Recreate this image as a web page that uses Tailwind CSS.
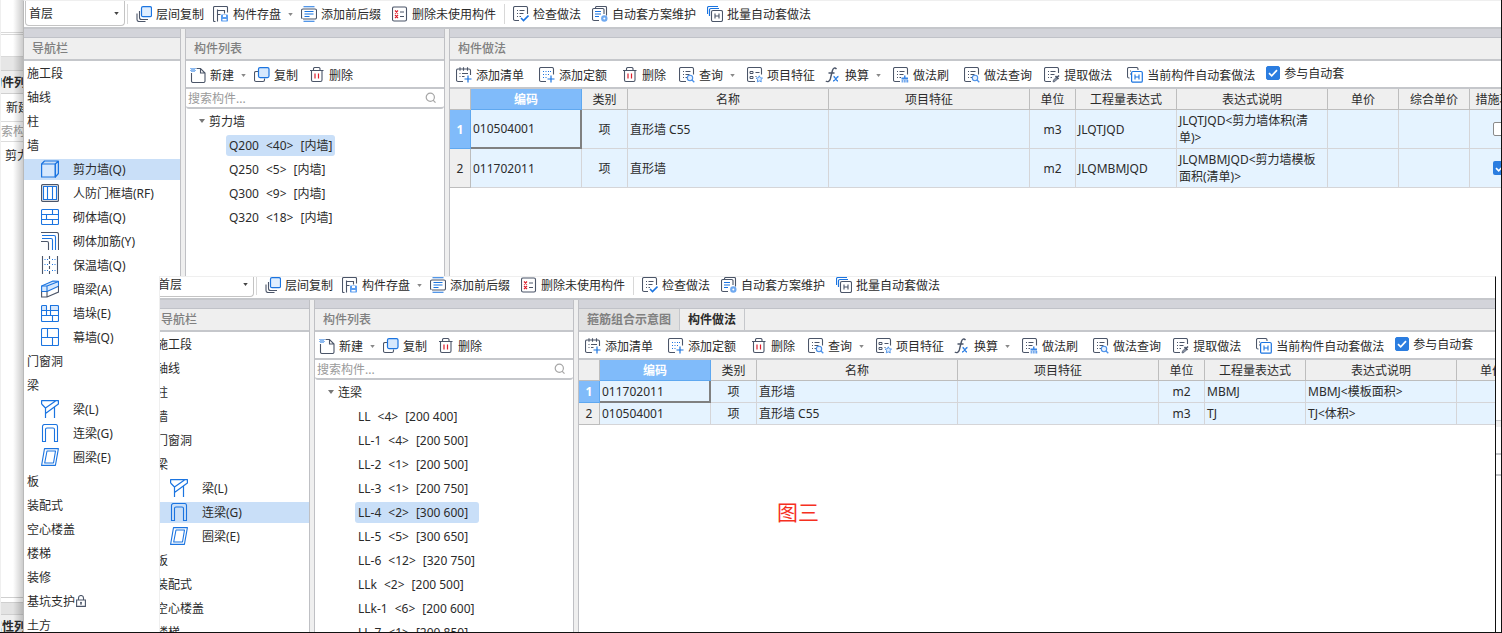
<!DOCTYPE html>
<html lang="zh-CN">
<head>
<meta charset="utf-8">
<title>构件做法</title>
<script src="https://cdn.jsdelivr.net/npm/@tailwindcss/browser@4"></script>
</head>
<body class="h-screen overflow-hidden bg-white font-['Noto_Sans','Noto_Sans_CJK_SC',sans-serif] text-[12px] leading-[17px] text-[#2b2b2b]">

<!-- icon sprite -->
<svg class="hidden" aria-hidden="true">
  <defs>
    <g id="d-lines" fill="none" stroke="#4b5568"><path d="M4 4.500h1M6.500 4.500h5M4 7.500h1M6.500 7.500h4M4 10.500h1M6.500 10.500h1.500"/></g>
    <symbol id="i-layers" viewBox="0 0 16 16"><g fill="none" stroke="#4b5568" stroke-width="1.100"><path d="M3.500 5v6.500a2 2 0 0 0 2 2H12"/><path d="M1 7.500v6a2 2 0 0 0 2 2h6.500"/></g><rect x="5.500" y=".7" width="10" height="10" rx="1.500" fill="#dfeeff" stroke="#1b74e0" stroke-width="1.200"/></symbol>
    <symbol id="i-save" viewBox="0 0 16 16"><path d="M2.500 15.500h-1a1 1 0 0 1-1-1V1.500a1 1 0 0 1 1-1h12a1 1 0 0 1 1 1v5M4.500 15.500v-12M4.500 8.500h3M4.500 4.500h7v3" fill="none" stroke="#4b5568" stroke-width="1.100"/><rect x="8" y="8.500" width="7" height="7" rx=".8" fill="#5a9df0"/><path d="M10 9h3v2h-3zM9.500 13h4v1.500h-4z" fill="#fff"/></symbol>
    <symbol id="i-affix" viewBox="0 0 16 16"><path d="M2.500 .7h11M2.500 15.300h11M3.500 5.500h9M3.500 8h9M3.500 10.500h5" fill="none" stroke="#1b74e0" stroke-width="1.100"/><path d="M1.500 12.500a1 1 0 0 1-1-1v-7A1.500 1.500 0 0 1 2 3h12a1.500 1.500 0 0 1 1.500 1.500v7A1.500 1.500 0 0 1 14 13H2" fill="none" stroke="#4b5568" stroke-width="1.100"/></symbol>
    <symbol id="i-unused" viewBox="0 0 16 16"><rect x=".5" y="1" width="14" height="14" rx="1.500" fill="none" stroke="#4b5568" stroke-width="1.100"/><path d="M3 4.500l3 3m0-3l-3 3M3 9l3 3m0-3l-3 3" stroke="#dd1f2d" stroke-width="1.200"/><path d="M8 6h4M8 10.500h4" stroke="#4b5568"/></symbol>
    <symbol id="i-check" viewBox="0 0 16 16"><path d="M6 14.500H2a1.500 1.500 0 0 1-1.500-1.500V2A1.500 1.500 0 0 1 2 .5h11A1.500 1.500 0 0 1 14.500 2v6" fill="none" stroke="#4b5568" stroke-width="1.100"/><use href="#d-lines"/><path d="M8 12l2.500 2.500 5-5" fill="none" stroke="#1b74e0" stroke-width="1.600"/></symbol>
    <symbol id="i-scheme" viewBox="0 0 16 16"><path d="M3.500 2.500V1.500a1 1 0 0 1 1-1h9a1 1 0 0 1 1 1v8M7 14.500H2A1.500 1.500 0 0 1 .5 13V4A1.400 1.400 0 0 1 2 2.500h8.500A1.400 1.400 0 0 1 12 4v4" fill="none" stroke="#4b5568" stroke-width="1.100"/><path d="M3 5.500h6M3 8h6M3 10.500h4" stroke="#1b74e0" stroke-width="1.100"/><circle cx="12.300" cy="12.500" r="3.200" fill="#6fa9f0"/><circle cx="12.300" cy="12.500" r="1" fill="#fff"/></symbol>
    <symbol id="i-batch" viewBox="0 0 16 16"><path d="M.5 8V2A1.400 1.400 0 0 1 2 .5h9M2.500 10V4A1.400 1.400 0 0 1 4 2.500h8" fill="none" stroke="#1b74e0" stroke-width="1.200"/><rect x="4.500" y="4.500" width="11" height="11" rx="1.500" fill="#fff" stroke="#4b5568" stroke-width="1.100"/><path d="M8 7.500v5M12 7.500v5M8 10h4" stroke="#4b5568" stroke-width="1.100"/></symbol>
    <symbol id="i-new" viewBox="0 0 16 16"><path d="M1.500 6v8a1.500 1.500 0 0 0 1.500 1.500h10.500a1.500 1.500 0 0 0 1.500-1.500V6L10.500 1.500H6.500M10.500 1.500V6H15" fill="none" stroke="#4b5568" stroke-width="1.100"/><path d="M.5 1h1v1h-1zM2.500 1h1v1h-1zM4.500 1h1v1h-1zM1.500 2h1v1h-1zM3.500 2h1v1h-1zM.5 3h1v1h-1zM2.500 3h1v1h-1zM4.500 3h1v1h-1zM1.500 4h1v1h-1zM3.500 4h1v1h-1z" fill="#1b74e0"/></symbol>
    <symbol id="i-copy" viewBox="0 0 16 16"><path d="M4 4.500H2A1.500 1.500 0 0 0 .5 6v7A1.500 1.500 0 0 0 2 14.500h7a1.500 1.500 0 0 0 1.500-1.500v-1.500" fill="none" stroke="#4b5568" stroke-width="1.100"/><rect x="4.500" y=".6" width="10.500" height="10" rx="1.500" fill="#d6e8fd" stroke="#1b74e0" stroke-width="1.200"/></symbol>
    <symbol id="i-trash" viewBox="0 0 16 16"><path d="M1 3.500h13.500M4.500 3.500V2A1.400 1.400 0 0 1 6 .5h3.500A1.400 1.400 0 0 1 11 2v1.500M2.500 3.500V13A1.500 1.500 0 0 0 4 14.500h7.500A1.500 1.500 0 0 0 13 13V3.500" fill="none" stroke="#4b5568" stroke-width="1.100"/><path d="M6 6.500v5M9.500 6.500v5" stroke="#dd1f2d" stroke-width="1.200"/></symbol>
    <symbol id="i-addlist" viewBox="0 0 16 16"><path d="M7 14.500H2A1.500 1.500 0 0 1 .5 13V3.500A1.500 1.500 0 0 1 2 2h11a1.500 1.500 0 0 1 1.500 1.500V8M4 .3v3.400M7.500.3v3.400M11.500.3v3.400" fill="none" stroke="#4b5568" stroke-width="1.100"/><path d="M3.500 6.500h1M6 6.500h6M3.500 9.500h1M6 9.500h2.500" stroke="#4b5568"/><path d="M8.500 12h7M12 8.500v7" stroke="#1b74e0" stroke-width="1.200"/></symbol>
    <symbol id="i-addquota" viewBox="0 0 16 16"><path d="M7 14.500H2A1.500 1.500 0 0 1 .5 13V2A1.500 1.500 0 0 1 2 .5h11A1.500 1.500 0 0 1 14.500 2v5.500" fill="none" stroke="#4b5568" stroke-width="1.100"/><path d="M4 4.500h1M6.500 4.500h1M9 4.500h1M11 4.500h1M4 7.500h1M6.500 7.500h1M9 7.500h1M4 10.500h1M6.500 10.500h1" stroke="#1b74e0" stroke-width="1"/><path d="M8.500 12h7M12 8.500v7" stroke="#1b74e0" stroke-width="1.200"/></symbol>
    <symbol id="i-query" viewBox="0 0 16 16"><path d="M7 14.500H2A1.500 1.500 0 0 1 .5 13V2A1.500 1.500 0 0 1 2 .5h11A1.500 1.500 0 0 1 14.500 2v5.500" fill="none" stroke="#4b5568" stroke-width="1.100"/><use href="#d-lines"/><circle cx="11" cy="11" r="2.700" fill="#e6f1ff" stroke="#4a90e8" stroke-width="1.100"/><path d="M13 13l2.300 2.300" stroke="#4a90e8" stroke-width="1.300"/></symbol>
    <symbol id="i-feature" viewBox="0 0 16 16"><path d="M8 14.500H2A1.500 1.500 0 0 1 .5 13V2A1.500 1.500 0 0 1 2 .5h11A1.500 1.500 0 0 1 14.500 2v5.500" fill="none" stroke="#4b5568" stroke-width="1.100"/><path d="M3 4.500h3v2H3zM3 9.500h3v2H3zM8.500 5.500h4M8.500 9.500h1" fill="none" stroke="#4b5568"/><path d="M12.300 8.800l1 2 2.200.3-1.600 1.600.4 2.200-2-1-2 1 .4-2.200-1.600-1.600 2.200-.3z" fill="#dfeeff" stroke="#4a90e8" stroke-width=".9"/></symbol>
    <symbol id="i-fx" viewBox="0 0 16 16"><path d="M11.500 2.200C10 .2 8 1 7.300 4L5.300 12c-.7 2.500-2.500 3.300-4.500 2M3.500 6h6" fill="none" stroke="#4b5568" stroke-width="1.400"/><path d="M8.500 9.500c2 0 2 4.500 4.500 4.500M13.500 9.500c-2 0-3 4.500-5.500 4.500" fill="none" stroke="#2f80e4" stroke-width="1.300"/></symbol>
    <symbol id="i-brush" viewBox="0 0 16 16"><path d="M7 14.500H2A1.500 1.500 0 0 1 .5 13V2A1.500 1.500 0 0 1 2 .5h11A1.500 1.500 0 0 1 14.500 2v5.500" fill="none" stroke="#4b5568" stroke-width="1.100"/><use href="#d-lines"/><path d="M11 8.500h1.500v2H15v2H8.500v-2H11zM8.700 13h1v2.500h-1zM10.700 13h1v2.500h-1zM12.500 13h1v2.500h-1zM14.200 13h1v2.500h-1z" fill="#3c87e6"/></symbol>
    <symbol id="i-extract" viewBox="0 0 16 16"><path d="M7 14.500H2A1.500 1.500 0 0 1 .5 13V2A1.500 1.500 0 0 1 2 .5h11A1.500 1.500 0 0 1 14.500 2v4" fill="none" stroke="#4b5568" stroke-width="1.100"/><use href="#d-lines"/><path d="M9 15l.5-2 3-3 1.500 1.500-3 3z" fill="#8892a3" stroke="#4b5568" stroke-width=".7"/><path d="M11.500 9l3 3M13 10.500L15 8.500" stroke="#4b5568" stroke-width="1.600"/></symbol>
    <symbol id="i-current" viewBox="0 0 16 16"><path d="M2.500 11H2A1.500 1.500 0 0 1 .5 9.500V2A1.500 1.500 0 0 1 2 .5h7.500A1.500 1.500 0 0 1 11 2v1M3 4h1M3 7h1" fill="none" stroke="#4b5568" stroke-width="1.100"/><rect x="4.600" y="4.500" width="10.700" height="10.700" rx="1.300" fill="#fff" stroke="#1b74e0" stroke-width="1.200"/><path d="M8 7.500v5M12 7.500v5M8 10h4" stroke="#1b74e0" stroke-width="1.100"/></symbol>
    <symbol id="i-search" viewBox="0 0 12 12"><circle cx="5.300" cy="5.300" r="4.100" fill="none" stroke="#a6a6a6" stroke-width="1.200"/><path d="M8 8.200l2.500 2.500" stroke="#a6a6a6" stroke-width="1.200"/></symbol>
    <symbol id="i-down" viewBox="0 0 6 4"><path d="M0 0h6L3 4z" fill="currentColor"/></symbol>
    <symbol id="i-lock" viewBox="0 0 10 12"><path d="M.6 5h8.800v6.400H.6zM2.500 5V3a2.500 2.500 0 0 1 5 0v2" fill="none" stroke="#4b5568" stroke-width="1.100"/><circle cx="5" cy="7.700" r="1" fill="#4b5568"/><path d="M5 8v2" stroke="#4b5568"/></symbol>

    <symbol id="n-wall" viewBox="0 0 18 18"><path d="M.6 4h13.700v13H.6z" fill="#d6e8fd" stroke="#1b74e0" stroke-width="1.200"/><path d="M.6 4L3.500 1h13.900v12.500L14.300 17V4l3-3" fill="none" stroke="#1b74e0" stroke-width="1.200" stroke-linejoin="round"/></symbol>
    <symbol id="n-door" viewBox="0 0 18 18"><rect x=".6" y=".6" width="16.800" height="16.800" rx="1" fill="none" stroke="#4b5568" stroke-width="1.200"/><path d="M2.500 2.500h13v13h-13zM6.500 2.500v13M11.500 2.500v13" fill="none" stroke="#1b74e0" stroke-width="1.100"/></symbol>
    <symbol id="n-brick" viewBox="0 0 18 18"><path d="M1.500 1.500h15a1 1 0 0 1 1 1v13a1 1 0 0 1-1 1h-15a1 1 0 0 1-1-1v-13a1 1 0 0 1 1-1zM1 6.500h16M1 11.500h16M11.500 1.500v5M5.500 6.500v5M11.500 11.500v5" fill="none" stroke="#1b74e0" stroke-width="1.100"/></symbol>
    <symbol id="n-rebar" viewBox="0 0 18 18"><path d="M0 .5h15.500a2 2 0 0 1 2 2V18M0 9.500h6A1.500 1.500 0 0 1 7.500 11v7" fill="none" stroke="#4b5568" stroke-width="1.100"/><path d="M1 3.500h12A1.500 1.500 0 0 1 14.500 5v13M1 6.500h9A1.500 1.500 0 0 1 11.500 8v10" fill="none" stroke="#1b74e0" stroke-width="1.100"/></symbol>
    <symbol id="n-insul" viewBox="0 0 18 18"><path d="M1.500 0v18M16.500 0v18M8.500 0v3M8.500 5v3M8.500 10v3M8.500 15v3" stroke="#4b5568" stroke-width="1.100"/><path d="M3.500 3.500h1M6 3.500h1M11 3.500h1M13.500 3.500h1M3.500 8.500h1M6 8.500h1M11 8.500h1M13.500 8.500h1M3.500 14.500h1M6 14.500h1M11 14.500h1M13.500 14.500h1" stroke="#1b74e0" stroke-width="1.100"/></symbol>
    <symbol id="n-hidden" viewBox="0 0 18 18"><path d="M.6 6L12 1l5.500.2v5L6 11.500H.6z" fill="#d6e8fd" stroke="#1b74e0" stroke-width="1.100" stroke-linejoin="round"/><path d="M.6 6H6v5.500M6 6l11.500-4.500" fill="none" stroke="#1b74e0" stroke-width="1.100"/><path d="M.6 11.500v5.500H6l11.500-5V6M6 11.500V17" fill="none" stroke="#4b5568" stroke-width="1.100"/></symbol>
    <symbol id="n-pier" viewBox="0 0 18 18"><path d="M.5 1h5v5.500h-5zM9.500 1h8v5.500h-8z" fill="#d6e8fd"/><path d="M5.500 1.500h-4a1 1 0 0 0-1 1v14a1 1 0 0 0 1 1h15a1 1 0 0 0 1-1v-14a1 1 0 0 0-1-1h-7v5M5.500 1.500v10M1 6.500h16M1 11.500h16M9.500 6.500v5M11.500 11.500v6" fill="none" stroke="#1b74e0" stroke-width="1.100"/></symbol>
    <symbol id="n-curtain" viewBox="0 0 18 18"><path d="M1.500.5h15a1 1 0 0 1 1 1v15a1 1 0 0 1-1 1h-15a1 1 0 0 1-1-1v-15a1 1 0 0 1 1-1zM1 9.500h16M6.500.5v9M11.500 9.500v8" fill="none" stroke="#1b74e0" stroke-width="1.100"/></symbol>
    <symbol id="n-beam" viewBox="0 0 18 18"><path d="M.6 4V.6h16.800V4L4.500 13.500M.6 4l3.900 4L14.500 1M4.500 8v10M13.500 7v11" fill="none" stroke="#1b74e0" stroke-width="1.200" stroke-linejoin="round"/></symbol>
    <symbol id="n-link" viewBox="0 0 18 18"><path d="M1.500 17.500v-15a2 2 0 0 1 2-2h11a2 2 0 0 1 2 2v15h-3V5.500a1.500 1.500 0 0 0-1.500-1.500H6a1.500 1.500 0 0 0-1.500 1.500v12z" fill="none" stroke="#1b74e0" stroke-width="1.100"/></symbol>
    <symbol id="n-ring" viewBox="0 0 18 18"><path d="M3.500.6h13.900l-3 16.800H.6zM6 3h8.500l-2 12H3.700z" fill="none" stroke="#1b74e0" stroke-width="1.100" stroke-linejoin="round"/></symbol>
  </defs>
</svg>

<!-- command bar shared by both windows -->
<template id="main-bar">
  <div class="flex h-[28px] shrink-0 items-center overflow-hidden border-b-2 border-[#c5c7cb] bg-white whitespace-nowrap">
    <label class="relative ml-px h-[26px] w-[100px] shrink-0">
      <span class="sr-only">楼层</span>
      <select class="h-[25px] w-full appearance-none rounded-b-[4px] border border-t-0 border-[#c4c4c4] bg-white px-[3px] outline-none"><option>首层</option></select>
      <svg class="pointer-events-none absolute top-[11px] right-[6px] h-[3px] w-[5px] text-[#444]"><use href="#i-down"/></svg>
    </label>
    <span class="mx-[2px] h-5 w-px bg-[#d8d8d8]"></span>
    <div class="ml-[6px] flex items-center gap-[11px] [&_button]:flex [&_button]:items-center [&_button]:gap-1 [&_button>svg]:size-4">
      <button><svg><use href="#i-layers"/></svg>层间复制</button>
      <button class="-ml-[2px]"><svg><use href="#i-save"/></svg>构件存盘<svg class="ml-[3px] !h-[3px] !w-[5px] text-[#888]"><use href="#i-down"/></svg></button>
      <button class="-ml-[3px]"><svg><use href="#i-affix"/></svg>添加前后缀</button>
      <button><svg><use href="#i-unused"/></svg>删除未使用构件</button>
      <span class="-mx-[3px] h-5 w-px bg-[#d8d8d8]"></span>
      <button><svg><use href="#i-check"/></svg>检查做法</button>
      <button><svg><use href="#i-scheme"/></svg>自动套方案维护</button>
      <button><svg><use href="#i-batch"/></svg>批量自动套做法</button>
    </div>
  </div>
</template>

<!-- toolbar and search box of the component list -->
<template id="list-bar">
  <div class="flex h-[28px] shrink-0 items-center border-b-2 border-[#c5c7cb] pt-[2px] pl-[4px] whitespace-nowrap [&_button]:flex [&_button]:items-center [&_button]:gap-1 [&_button>svg]:size-4">
    <button><svg><use href="#i-new"/></svg>新建<svg class="ml-[3px] !h-[3px] !w-[5px] text-[#888]"><use href="#i-down"/></svg></button>
    <button class="ml-2"><svg><use href="#i-copy"/></svg>复制</button>
    <button class="ml-[11px]"><svg><use href="#i-trash"/></svg>删除</button>
  </div>
  <label class="flex h-[20px] shrink-0 items-center rounded-[3px] border-b-2 border-[#c5c7cb] pr-[7px] pl-[2px]">
    <input class="min-w-0 flex-1 bg-transparent outline-none placeholder:text-[#9a9a9a]" placeholder="搜索构件..." aria-label="搜索构件">
    <svg class="size-3"><use href="#i-search"/></svg>
  </label>
</template>

<!-- toolbar of the work-item panel -->
<template id="work-bar">
  <div class="flex h-[28px] shrink-0 items-center border-b-2 border-[#c5c7cb] pt-[2px] pl-[6px] whitespace-nowrap [&_button]:flex [&_button]:items-center [&_button]:gap-1 [&_button>svg]:size-4">
    <button><svg><use href="#i-addlist"/></svg>添加清单</button>
    <button class="ml-[15px]"><svg><use href="#i-addquota"/></svg>添加定额</button>
    <button class="ml-[15px]"><svg><use href="#i-trash"/></svg>删除</button>
    <button class="ml-[13px]"><svg><use href="#i-query"/></svg>查询<svg class="ml-[3px] !h-[3px] !w-[5px] text-[#888]"><use href="#i-down"/></svg></button>
    <button class="ml-[12px]"><svg><use href="#i-feature"/></svg>项目特征</button>
    <button class="ml-[10px]"><svg><use href="#i-fx"/></svg>换算<svg class="ml-[3px] !h-[3px] !w-[5px] text-[#888]"><use href="#i-down"/></svg></button>
    <button class="ml-[12px]"><svg><use href="#i-brush"/></svg>做法刷</button>
    <button class="ml-[15px]"><svg><use href="#i-query"/></svg>做法查询</button>
    <button class="ml-[12px]"><svg><use href="#i-extract"/></svg>提取做法</button>
    <button class="ml-[15px]"><svg><use href="#i-current"/></svg>当前构件自动套做法</button>
    <label class="mb-1 ml-[11px] flex items-center gap-1">
      <span class="grid size-[14px]">
        <input type="checkbox" checked class="peer col-start-1 row-start-1 size-[14px] appearance-none rounded-[2px] border border-[#8a8a8a] checked:border-[#2b7de0] checked:bg-[#2b7de0]">
        <svg viewBox="0 0 14 14" class="pointer-events-none col-start-1 row-start-1 hidden peer-checked:block"><path d="M3 7.200l2.700 2.600L11 4.200" fill="none" stroke="#fff" stroke-width="1.700"/></svg>
      </span>参与自动套
    </label>
  </div>
</template>

<div class="relative flex h-full overflow-hidden border-r border-b border-[#111]">

  <!-- sliver of the window behind -->
  <aside class="relative flex w-[23px] shrink-0 flex-col overflow-hidden border-l border-[#efefef] whitespace-nowrap">
    <div class="h-[33px] shrink-0 border-b border-[#d9d9d9]"></div>
    <div class="mt-px h-[23px] shrink-0 border-y border-[#d9d9d9]"></div>
    <div class="h-[14px] shrink-0 border-b border-[#cfcfcf] bg-[#e6e6e6]"></div>
    <div class="-ml-px flex h-[23px] shrink-0 items-center border-b border-[#d0d0d0] bg-[#efefef] font-bold"><span class="-ml-[10px]">构件列表</span></div>
    <div class="flex h-[28px] shrink-0 items-center border-b border-[#dcdcdc] pl-[5px]">新建</div>
    <div class="flex h-[20px] shrink-0 items-center border-b border-[#dcdcdc] text-[#9a9a9a]"><span class="-ml-[12px]">搜索构件</span></div>
    <div class="flex h-[27px] shrink-0 items-center pl-1">剪力墙</div>
    <div class="h-[429px] shrink-0 border-b border-[#cfcfcf]"></div>
    <div class="mt-[4px] h-[13px] shrink-0 border-y border-[#cfcfcf] bg-[#e3e3e3]"></div>
    <div class="flex h-[23px] shrink-0 items-center bg-[#efefef] font-bold"><span class="-ml-[11px]">属性列表</span></div>
    <div class="absolute inset-y-0 right-0 w-[10px] bg-linear-to-r from-black/0 to-black/20"></div>
  </aside>

  <!-- first window -->
  <section class="flex min-w-0 flex-1 flex-col border-t border-l border-t-[#efefef] border-l-[#b9b9b9] bg-white">
    <div class="contents" data-bar="main-bar"></div>
    <div class="flex min-h-0 flex-1 bg-[#efefef]">

      <nav class="flex w-[157px] shrink-0 flex-col overflow-hidden border-r border-[#bfc0c4] bg-white">
        <div class="h-[9px] shrink-0 border-b border-[#c0c2c8] bg-[#d3d4da]"></div>
        <h2 class="flex h-[23px] shrink-0 items-center border-b-2 border-[#c5c7cb] bg-[#efefef] pl-[8px] font-medium text-[#808080]">导航栏</h2>
        <ul class="[&_a]:flex [&_a]:h-[21px] [&_a]:items-center [&_li]:flex [&_li]:h-6 [&_li]:flex-col [&_li]:justify-center [&_li>a]:pl-[3px] [&_svg]:mr-[14px] [&_svg]:ml-[14px] [&_svg]:size-[18px]">
          <li><a href="#">施工段</a></li>
          <li><a href="#">轴线</a></li>
          <li><a href="#">柱</a></li>
          <li><a href="#">墙</a></li>
          <li><a href="#" class="bg-[#c9dff8]" aria-current="true"><svg><use href="#n-wall"/></svg>剪力墙(Q)</a></li>
          <li><a href="#"><svg><use href="#n-door"/></svg>人防门框墙(RF)</a></li>
          <li><a href="#"><svg><use href="#n-brick"/></svg>砌体墙(Q)</a></li>
          <li><a href="#"><svg><use href="#n-rebar"/></svg>砌体加筋(Y)</a></li>
          <li><a href="#"><svg><use href="#n-insul"/></svg>保温墙(Q)</a></li>
          <li><a href="#"><svg><use href="#n-hidden"/></svg>暗梁(A)</a></li>
          <li><a href="#"><svg><use href="#n-pier"/></svg>墙垛(E)</a></li>
          <li><a href="#"><svg><use href="#n-curtain"/></svg>幕墙(Q)</a></li>
          <li><a href="#">门窗洞</a></li>
          <li><a href="#">梁</a></li>
          <li><a href="#"><svg><use href="#n-beam"/></svg>梁(L)</a></li>
          <li><a href="#"><svg><use href="#n-link"/></svg>连梁(G)</a></li>
          <li><a href="#"><svg><use href="#n-ring"/></svg>圈梁(E)</a></li>
          <li><a href="#">板</a></li>
          <li><a href="#">装配式</a></li>
          <li><a href="#">空心楼盖</a></li>
          <li><a href="#">楼梯</a></li>
          <li><a href="#">装修</a></li>
          <li><a href="#">基坑支护<svg class="!mx-px !h-3 !w-[10px]"><use href="#i-lock"/></svg></a></li>
          <li><a href="#">土方</a></li>
        </ul>
      </nav>

      <section class="ml-[4px] flex w-[260px] shrink-0 flex-col overflow-hidden border-x border-[#bfc0c4] bg-white">
        <div class="h-[9px] shrink-0 border-b border-[#c0c2c8] bg-[#d3d4da]"></div>
        <h2 class="flex h-[23px] shrink-0 items-center border-b-2 border-[#c5c7cb] bg-[#efefef] pl-[8px] font-medium text-[#808080]">构件列表</h2>
        <div class="contents" data-bar="list-bar"></div>
        <ul class="[&_li]:flex [&_li]:h-6 [&_li]:items-center [&_li>a]:ml-10 [&_li>a]:flex [&_li>a]:gap-[7px] [&_li>a]:rounded-[3px] [&_li>a]:px-[3px] [&_li>a]:py-[2px]">
          <li class="pl-[13px]"><svg class="mr-1 h-1 w-[6px] text-[#777]"><use href="#i-down"/></svg>剪力墙</li>
          <li><a href="#" class="bg-[#c9dff8]"><span>Q200</span> <span>&lt;40&gt;</span> <span>[内墙]</span></a></li>
          <li><a href="#"><span>Q250</span> <span>&lt;5&gt;</span> <span>[内墙]</span></a></li>
          <li><a href="#"><span>Q300</span> <span>&lt;9&gt;</span> <span>[内墙]</span></a></li>
          <li><a href="#"><span>Q320</span> <span>&lt;18&gt;</span> <span>[内墙]</span></a></li>
        </ul>
      </section>

      <section class="ml-[4px] flex min-w-0 flex-1 flex-col overflow-hidden border-l border-[#bfc0c4] bg-white">
        <div class="h-[9px] shrink-0 border-b border-[#c0c2c8] bg-[#d3d4da]"></div>
        <h2 class="flex h-[23px] shrink-0 items-center border-b-2 border-[#c5c7cb] bg-[#efefef] pl-[8px] font-medium text-[#808080]">构件做法</h2>
        <div class="contents" data-bar="work-bar"></div>
        <table class="w-[1080px] shrink-0 table-fixed border-separate border-spacing-0 bg-[#e5f3ff] [&_td]:border-r [&_td]:border-b [&_td]:border-[#d5d5d8] [&_td]:px-[2px] [&_td]:py-0 [&_th]:border-r [&_th]:border-b [&_th]:border-[#bdbdbd] [&_th]:bg-[#efefef] [&_th]:p-0 [&_th]:font-normal">
          <colgroup><col class="w-[21px]"><col class="w-[111px]"><col class="w-[46px]"><col class="w-[201px]"><col class="w-[201px]"><col class="w-[46px]"><col class="w-[101px]"><col class="w-[151px]"><col class="w-[71px]"><col class="w-[71px]"><col class="w-[60px]"></colgroup>
          <thead><tr class="h-[21px]"><th></th><th class="!border-[#5fa8f0] !bg-[#80bbfa] !font-bold text-white">编码</th><th>类别</th><th>名称</th><th>项目特征</th><th>单位</th><th>工程量表达式</th><th>表达式说明</th><th>单价</th><th>综合单价</th><th>措施项目</th></tr></thead>
          <tbody>
            <tr class="h-[39px]"><th class="!border-[#5fa8f0] !bg-[#80bbfa] !font-bold text-white">1</th><td class="!border-r-2 !border-b-2 !border-[#808080]">010504001</td><td class="text-center">项</td><td>直形墙 C55</td><td></td><td class="text-center">m3</td><td>JLQTJQD</td><td class="!pr-3 break-all">JLQTJQD&lt;剪力墙体积(清单)&gt;</td><td></td><td></td>
              <td><input type="checkbox" aria-label="措施项目 1" class="mx-auto block size-[14px] appearance-none rounded-[2px] border border-[#8a8a8a] bg-white"></td></tr>
            <tr class="h-[39px]"><th>2</th><td>011702011</td><td class="text-center">项</td><td>直形墙</td><td></td><td class="text-center">m2</td><td>JLQMBMJQD</td><td class="break-all">JLQMBMJQD&lt;剪力墙模板面积(清单)&gt;</td><td></td><td></td>
              <td><span class="mx-auto grid size-[14px]"><input type="checkbox" checked aria-label="措施项目 2" class="col-start-1 row-start-1 size-[14px] appearance-none rounded-[2px] bg-[#2b7de0]"><svg viewBox="0 0 14 14" class="pointer-events-none col-start-1 row-start-1"><path d="M3 7.200l2.700 2.600L11 4.200" fill="none" stroke="#fff" stroke-width="1.700"/></svg></span></td></tr>
          </tbody>
        </table>
        <div class="mt-[232px] h-[7px] shrink-0 border-t border-[#c5c7cb] bg-[#efefef]"></div>
        <div class="h-[28px] shrink-0 border-b-2 border-[#c5c7cb]"></div>
        <div class="h-[21px] shrink-0 border-b-2 border-[#c5c7cb]"></div>
      </section>
    </div>
  </section>

  <!-- second window, lying over the first -->
  <div class="absolute top-[276px] right-[5px] bottom-0 left-[159px] flex overflow-hidden border-t border-r border-l border-t-[#efefef] border-r-[#111] border-l-[#efefef] bg-white">
    <section class="-mt-[5px] -ml-[7px] flex min-w-0 flex-1 flex-col">
      <div class="contents" data-bar="main-bar"></div>
      <div class="flex min-h-0 flex-1 bg-[#efefef]">

        <nav class="flex w-[157px] shrink-0 flex-col overflow-hidden border-r border-[#bfc0c4] bg-white">
          <div class="h-[9px] shrink-0 border-b border-[#c0c2c8] bg-[#d3d4da]"></div>
          <h2 class="flex h-[23px] shrink-0 items-center border-b-2 border-[#c5c7cb] bg-[#efefef] pl-[8px] font-medium text-[#808080]">导航栏</h2>
          <ul class="[&_a]:flex [&_a]:h-[21px] [&_a]:items-center [&_li]:flex [&_li]:h-6 [&_li]:flex-col [&_li]:justify-center [&_li>a]:pl-[3px] [&_svg]:mr-[14px] [&_svg]:ml-[14px] [&_svg]:size-[18px]">
            <li><a href="#">施工段</a></li>
            <li><a href="#">轴线</a></li>
            <li><a href="#">柱</a></li>
            <li><a href="#">墙</a></li>
            <li><a href="#">门窗洞</a></li>
            <li><a href="#">梁</a></li>
            <li><a href="#"><svg><use href="#n-beam"/></svg>梁(L)</a></li>
            <li><a href="#" class="bg-[#c9dff8]" aria-current="true"><svg><use href="#n-link"/></svg>连梁(G)</a></li>
            <li><a href="#"><svg><use href="#n-ring"/></svg>圈梁(E)</a></li>
            <li><a href="#">板</a></li>
            <li><a href="#">装配式</a></li>
            <li><a href="#">空心楼盖</a></li>
            <li><a href="#">楼梯</a></li>
          </ul>
        </nav>

        <section class="ml-[4px] flex w-[260px] shrink-0 flex-col overflow-hidden border-x border-[#bfc0c4] bg-white">
          <div class="h-[9px] shrink-0 border-b border-[#c0c2c8] bg-[#d3d4da]"></div>
          <h2 class="flex h-[23px] shrink-0 items-center border-b-2 border-[#c5c7cb] bg-[#efefef] pl-[8px] font-medium text-[#808080]">构件列表</h2>
          <div class="contents" data-bar="list-bar"></div>
          <ul class="[&_li]:flex [&_li]:h-6 [&_li]:items-center [&_li>a]:ml-10 [&_li>a]:flex [&_li>a]:gap-[7px] [&_li>a]:rounded-[3px] [&_li>a]:py-[2px] [&_li>a]:pr-[11px] [&_li>a]:pl-[3px]">
            <li class="pl-[13px]"><svg class="mr-1 h-1 w-[6px] text-[#777]"><use href="#i-down"/></svg>连梁</li>
            <li><a href="#"><span>LL</span> <span>&lt;4&gt;</span> <span>[200 400]</span></a></li>
            <li><a href="#"><span>LL-1</span> <span>&lt;4&gt;</span> <span>[200 500]</span></a></li>
            <li><a href="#"><span>LL-2</span> <span>&lt;1&gt;</span> <span>[200 500]</span></a></li>
            <li><a href="#"><span>LL-3</span> <span>&lt;1&gt;</span> <span>[200 750]</span></a></li>
            <li><a href="#" class="bg-[#c9dff8]"><span>LL-4</span> <span>&lt;2&gt;</span> <span>[300 600]</span></a></li>
            <li><a href="#"><span>LL-5</span> <span>&lt;5&gt;</span> <span>[300 650]</span></a></li>
            <li><a href="#"><span>LL-6</span> <span>&lt;12&gt;</span> <span>[320 750]</span></a></li>
            <li><a href="#"><span>LLk</span> <span>&lt;2&gt;</span> <span>[200 500]</span></a></li>
            <li><a href="#"><span>LLk-1</span> <span>&lt;6&gt;</span> <span>[200 600]</span></a></li>
            <li><a href="#"><span>LL-7</span> <span>&lt;1&gt;</span> <span>[200 850]</span></a></li>
          </ul>
        </section>

        <section class="relative ml-[4px] flex min-w-0 flex-1 flex-col overflow-hidden border-l border-[#bfc0c4] bg-white">
          <div class="h-[9px] shrink-0 border-b border-[#c0c2c8] bg-[#d3d4da]"></div>
          <div class="flex h-[23px] shrink-0 border-b-2 border-[#c5c7cb] bg-[#efefef] font-bold" role="tablist">
            <button role="tab" aria-selected="false" class="border-r border-[#c5c7cb] bg-[#e1e1e1] px-[8px] text-[#808080]">箍筋组合示意图</button>
            <button role="tab" aria-selected="true" class="border-r border-[#c5c7cb] px-[8px]">构件做法</button>
          </div>
          <div class="contents" data-bar="work-bar"></div>
          <table class="w-[949px] shrink-0 table-fixed border-separate border-spacing-0 bg-[#e5f3ff] [&_td]:border-r [&_td]:border-b [&_td]:border-[#d5d5d8] [&_td]:px-[2px] [&_td]:py-0 [&_th]:border-r [&_th]:border-b [&_th]:border-[#bdbdbd] [&_th]:bg-[#efefef] [&_th]:p-0 [&_th]:font-normal">
            <colgroup><col class="w-[21px]"><col class="w-[111px]"><col class="w-[46px]"><col class="w-[201px]"><col class="w-[201px]"><col class="w-[46px]"><col class="w-[101px]"><col class="w-[151px]"><col class="w-[71px]"></colgroup>
            <thead><tr class="h-[21px]"><th></th><th class="!border-[#5fa8f0] !bg-[#80bbfa] !font-bold text-white">编码</th><th>类别</th><th>名称</th><th>项目特征</th><th>单位</th><th>工程量表达式</th><th>表达式说明</th><th>单价</th></tr></thead>
            <tbody>
              <tr class="h-[22px]"><th class="!border-[#5fa8f0] !bg-[#80bbfa] !font-bold text-white">1</th><td class="!border-r-2 !border-b-2 !border-[#808080]">011702011</td><td class="text-center">项</td><td>直形墙</td><td></td><td class="text-center">m2</td><td>MBMJ</td><td>MBMJ&lt;模板面积&gt;</td><td></td></tr>
              <tr class="h-[22px]"><th>2</th><td>010504001</td><td class="text-center">项</td><td>直形墙 C55</td><td></td><td class="text-center">m3</td><td>TJ</td><td>TJ&lt;体积&gt;</td><td></td></tr>
            </tbody>
          </table>
          <p class="absolute top-[198px] left-[198px] text-[21px] leading-[28px] text-[#f5301f]">图三</p>
        </section>
      </div>
    </section>
  </div>
</div>

<script>
  for (const slot of document.querySelectorAll('[data-bar]'))
    slot.append(document.getElementById(slot.dataset.bar).content.cloneNode(true));
</script>
</body>
</html>
